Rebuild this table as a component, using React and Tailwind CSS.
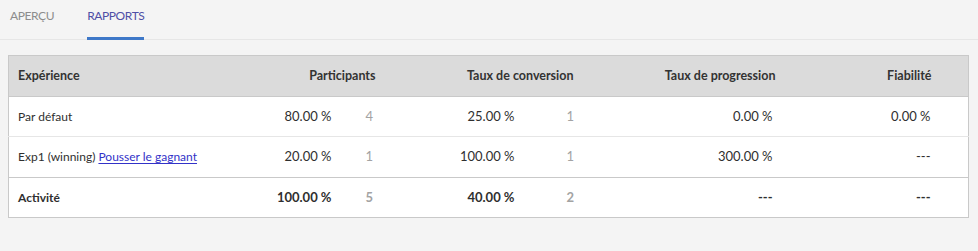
import React from 'react';

const rows = [
  { name: 'Par défaut', part: '80.00 %', partN: '4', conv: '25.00 %', convN: '1', prog: '0.00 %', fiab: '0.00 %' },
  { name: 'Exp1 (winning)', link: 'Pousser le gagnant', part: '20.00 %', partN: '1', conv: '100.00 %', convN: '1', prog: '300.00 %', fiab: '---' },
];

const Row = ({ r, bold, last, tall }) => (
  <tr className={`${tall ? 'h-[41px]' : 'h-[40px]'} bg-white ${last ? 'border-t border-[#c9c9c9]' : 'border-t border-[#e6e6e6]'} ${bold ? 'font-bold' : ''}`}>
    <td className="pl-[9px] text-[12px] text-[#2f2f2f]">
      {r.name}
      {r.link && (
        <>
          {' '}
          <a href="#" className="text-[#3232c8] underline underline-offset-2">{r.link}</a>
        </>
      )}
    </td>
    <td className="pr-[9px] text-right text-[#2f2f2f]">{r.part}</td>
    <td className="pl-[25px] text-[#a3a3a3]">{r.partN}</td>
    <td className="pr-[10px] text-right text-[#2f2f2f]">{r.conv}</td>
    <td className="pl-[42px] text-[#a3a3a3]">{r.convN}</td>
    <td className="pr-[10px] text-right text-[#2f2f2f]">{r.prog}</td>
    <td className="pr-[10px] text-right text-[#2f2f2f]">{r.fiab}</td>
    <td />
  </tr>
);

export default function App() {
  return (
    <div className="min-h-[251px] bg-[#f4f4f4] font-['Lato',sans-serif] text-[13px]">
      <div className="flex h-[40px] items-stretch gap-[33px] border-b border-[#e6e6e6] pl-[10px] text-[12px] tracking-[-0.4px]">
        <div className="flex items-center pb-[7px] text-[#8c8c8c]">APERÇU</div>
        <div className="relative flex items-center pb-[7px] text-[#4f4fa6]">
          RAPPORTS
          <span className="absolute bottom-[-1px] left-0 right-0 h-[3px] bg-[#3e78c8]" />
        </div>
      </div>

      <div className="px-[8px] pt-[15px]">
        <table className="w-[960px] table-fixed border-collapse border border-[#c9c9c9]">
          <colgroup>
            <col className="w-[242px]" />
            <col className="w-[90px]" />
            <col className="w-[44px]" />
            <col className="w-[140px]" />
            <col className="w-[58px]" />
            <col className="w-[200px]" />
            <col className="w-[158px]" />
            <col className="w-[28px]" />
          </colgroup>
          <thead>
            <tr className="h-[41px] bg-[#dbdbdb] border-b border-[#c9c9c9] text-[12.5px] font-bold text-[#333]">
              <th className="pl-[9px] text-left">Expérience</th>
              <th colSpan={2} className="pr-[9px] text-right">Participants</th>
              <th colSpan={2} className="pr-[9px] text-right">Taux de conversion</th>
              <th className="pr-[7px] text-right">Taux de progression</th>
              <th className="pr-[9px] text-right">Fiabilité</th>
              <th />
            </tr>
          </thead>
          <tbody>
            {rows.map((r, i) => (
              <Row key={r.name} r={r} tall={i === 1} />
            ))}
            <Row r={{ name: 'Activité', part: '100.00 %', partN: '5', conv: '40.00 %', convN: '2', prog: '---', fiab: '---' }} bold last />
          </tbody>
        </table>
      </div>
    </div>
  );
}
